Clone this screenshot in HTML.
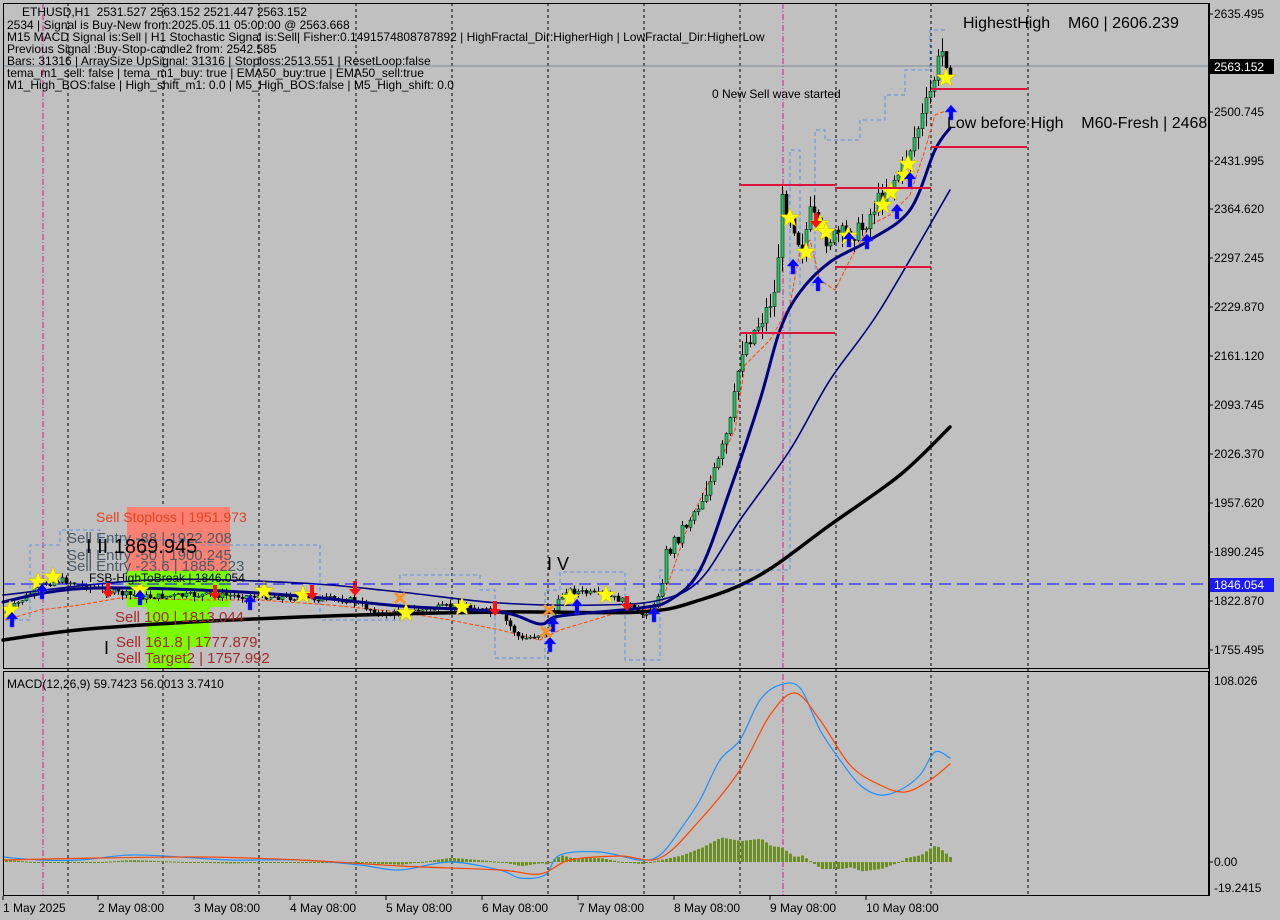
<!DOCTYPE html>
<html><head><meta charset="utf-8"><style>
html,body{margin:0;padding:0;background:#c0c0c0;width:1280px;height:920px;overflow:hidden}
svg{display:block}
text{font-family:"Liberation Sans","DejaVu Sans",sans-serif;white-space:pre}
</style></head><body>
<svg id="s" width="1280" height="920" viewBox="0 0 1280 920" xmlns="http://www.w3.org/2000/svg">
<rect width="1280" height="920" fill="#c0c0c0"/>
<g stroke="#000" stroke-width="1" stroke-dasharray="3,3">
<line x1="68" y1="3" x2="68" y2="895"/><line x1="163" y1="3" x2="163" y2="895"/><line x1="259" y1="3" x2="259" y2="895"/><line x1="356" y1="3" x2="356" y2="895"/><line x1="452" y1="3" x2="452" y2="895"/><line x1="548" y1="3" x2="548" y2="895"/><line x1="644" y1="3" x2="644" y2="895"/><line x1="740" y1="3" x2="740" y2="895"/><line x1="836" y1="3" x2="836" y2="895"/><line x1="931" y1="3" x2="931" y2="895"/><line x1="1028" y1="3" x2="1028" y2="895"/>
</g>
<g stroke="#d0208a" stroke-dasharray="6,2,1,2"><line x1="43" y1="3" x2="43" y2="895"/><line x1="783" y1="3" x2="783" y2="895"/></g>
<line x1="3" y1="66" x2="1209" y2="66" stroke="#778899"/>
<rect x="127" y="507" width="103" height="64" fill="#fa8072"/>
<rect x="127" y="571" width="103" height="36" fill="#7cfc00"/>
<rect x="147" y="607" width="63" height="40" fill="#7cfc00"/>
<rect x="147" y="647" width="43" height="21" fill="#7cfc00"/>
<g id="dyn"></g>
<line x1="3" y1="584" x2="1209" y2="584" stroke="#0000ff" stroke-dasharray="12,6"/>
<g stroke="#dc143c" stroke-width="2">
<line x1="740" y1="185" x2="835" y2="185"/><line x1="835" y1="188" x2="931" y2="188"/><line x1="835" y1="267" x2="931" y2="267"/><line x1="740" y1="333" x2="835" y2="333"/><line x1="931" y1="89" x2="1027" y2="89"/><line x1="931" y1="147" x2="1027" y2="147"/>
</g>
<g font-size="12" fill="#000">
<text x="22" y="16">ETHUSD,H1  2531.527 2563.152 2521.447 2563.152</text>
<text x="7" y="29">2534 | Signal is Buy-New from:2025.05.11 05:00:00 @ 2563.668</text>
<text x="7" y="41">M15 MACD Signal is:Sell | H1 Stochastic Signal is:Sell| Fisher:0.1491574808787892 | HighFractal_Dir:HigherHigh | LowFractal_Dir:HigherLow</text>
<text x="7" y="53">Previous Signal :Buy-Stop-candle2 from: 2542.585</text>
<text x="7" y="65">Bars: 31316 | ArraySize UpSignal: 31316 | Stoploss:2513.551 | ResetLoop:false</text>
<text x="7" y="77">tema_m1_sell: false | tema_m1_buy: true | EMA50_buy:true | EMA50_sell:true</text>
<text x="7" y="89">M1_High_BOS:false | High_shift_m1: 0.0 | M5_High_BOS:false | M5_High_shift: 0.0</text>
<text x="712" y="98">0 New Sell wave started</text>
<text x="7" y="688">MACD(12,26,9) 59.7423 56.0013 3.7410</text>
</g>
<text x="963" y="28" font-size="16">HighestHigh    M60 | 2606.239</text>
<svg x="0" y="0" width="1209" height="668" overflow="hidden"><text x="947" y="128" font-size="16">Low before High    M60-Fresh | 2468.195</text></svg>
<text x="547" y="570" font-size="18">I V</text>
<text x="96" y="522" font-size="14" fill="#e8401c">Sell Stoploss | 1951.973</text>
<text x="67" y="543" font-size="15" fill="#4a5a68">Sell Entry -88 | 1922.208</text>
<text x="67" y="560" font-size="15" fill="#4a5a68">Sell Entry -50 | 1900.245</text>
<text x="67" y="571" font-size="15" fill="#4a5a68">Sell Entry -23.6 | 1885.223</text>
<text x="86" y="553" font-size="20" fill="#000">I II 1869.945</text>
<text x="89" y="582" font-size="12" fill="#000">FSB-HighToBreak | 1846.054</text>
<text x="115" y="622" font-size="15" fill="#a52a2a">Sell 100 | 1813.044</text>
<text x="116" y="647" font-size="15" fill="#a52a2a">Sell 161.8 | 1777.879</text>
<text x="116" y="663" font-size="15" fill="#a52a2a">Sell Target2 | 1757.992</text>
<text x="104" y="654" font-size="18" fill="#000">I</text>
<rect x="3.5" y="3.5" width="1205" height="665" fill="none" stroke="#000"/>
<rect x="3.5" y="671.5" width="1205" height="224" fill="none" stroke="#000"/>
<line x1="1209.5" y1="3" x2="1209.5" y2="896" stroke="#000"/>
<g font-size="12" fill="#000">
<text x="1214" y="18">2635.495</text><text x="1214" y="116">2500.745</text><text x="1214" y="165">2431.995</text><text x="1214" y="213">2364.620</text><text x="1214" y="262">2297.245</text><text x="1214" y="311">2229.870</text><text x="1214" y="360">2161.120</text><text x="1214" y="409">2093.745</text><text x="1214" y="458">2026.370</text><text x="1214" y="507">1957.620</text><text x="1214" y="556">1890.245</text><text x="1214" y="605">1822.870</text><text x="1214" y="654">1755.495</text>
<text x="1214" y="685">108.026</text><text x="1214" y="866">0.00</text><text x="1214" y="892">-19.2415</text>
</g>
<rect x="1210" y="59" width="64" height="15" fill="#000"/><text x="1214" y="71" font-size="12" fill="#fff">2563.152</text>
<rect x="1210" y="578" width="64" height="14" fill="#1a1aff"/><text x="1214" y="589" font-size="12" fill="#fff">1846.054</text>
<g stroke="#000"><line x1="1209" y1="14" x2="1213" y2="14"/><line x1="1209" y1="112" x2="1213" y2="112"/><line x1="1209" y1="161" x2="1213" y2="161"/><line x1="1209" y1="209" x2="1213" y2="209"/><line x1="1209" y1="258" x2="1213" y2="258"/><line x1="1209" y1="307" x2="1213" y2="307"/><line x1="1209" y1="356" x2="1213" y2="356"/><line x1="1209" y1="405" x2="1213" y2="405"/><line x1="1209" y1="454" x2="1213" y2="454"/><line x1="1209" y1="503" x2="1213" y2="503"/><line x1="1209" y1="552" x2="1213" y2="552"/><line x1="1209" y1="601" x2="1213" y2="601"/><line x1="1209" y1="650" x2="1213" y2="650"/><line x1="1209" y1="862" x2="1213" y2="862"/></g>
<g font-size="12" fill="#000">
<text x="3" y="912">1 May 2025</text><text x="98" y="912">2 May 08:00</text><text x="194" y="912">3 May 08:00</text><text x="290" y="912">4 May 08:00</text><text x="386" y="912">5 May 08:00</text><text x="482" y="912">6 May 08:00</text><text x="578" y="912">7 May 08:00</text><text x="674" y="912">8 May 08:00</text><text x="770" y="912">9 May 08:00</text><text x="866" y="912">10 May 08:00</text>
</g>
<g stroke="#000"><line x1="3" y1="896" x2="3" y2="900"/><line x1="98" y1="896" x2="98" y2="900"/><line x1="194" y1="896" x2="194" y2="900"/><line x1="290" y1="896" x2="290" y2="900"/><line x1="386" y1="896" x2="386" y2="900"/><line x1="482" y1="896" x2="482" y2="900"/><line x1="578" y1="896" x2="578" y2="900"/><line x1="674" y1="896" x2="674" y2="900"/><line x1="770" y1="896" x2="770" y2="900"/><line x1="866" y1="896" x2="866" y2="900"/></g>
</svg>
<script>
(function(){
var NS="http://www.w3.org/2000/svg",g=document.getElementById("dyn");
function el(n,a){var e=document.createElementNS(NS,n);for(var k in a)e.setAttribute(k,a[k]);g.appendChild(e);return e;}
function interp(p,x){for(var i=1;i<p.length;i++){if(x<=p[i][0]){var a=p[i-1],b=p[i];return a[1]+(b[1]-a[1])*(x-a[0])/(b[0]-a[0]);}}return p[p.length-1][1];}
function pl(p,st,w,da){el("polyline",{points:p.map(function(q){return q.join(",")}).join(" "),fill:"none",stroke:st,"stroke-width":w,"stroke-dasharray":da||"none","stroke-linejoin":"round"});}
function sm(p,st,w){var d="M"+p[0][0]+" "+p[0][1];for(var i=0;i<p.length-1;i++){var p0=p[Math.max(0,i-1)],p1=p[i],p2=p[i+1],p3=p[Math.min(p.length-1,i+2)];
d+=" C"+(p1[0]+(p2[0]-p0[0])/6).toFixed(1)+" "+(p1[1]+(p2[1]-p0[1])/6).toFixed(1)+" "+(p2[0]-(p3[0]-p1[0])/6).toFixed(1)+" "+(p2[1]-(p3[1]-p1[1])/6).toFixed(1)+" "+p2[0]+" "+p2[1];}
el("path",{d:d,fill:"none",stroke:st,"stroke-width":w,"stroke-linecap":"round"});}
var seed=7;function rnd(){seed=(seed*9301+49297)%233280;return seed/233280;}
var price=[[5,612],[40,585],[60,580],[100,590],[140,597],[200,595],[260,596],[300,598],[350,600],[380,615],[420,610],[460,605],[500,615],[520,640],[545,632],[555,605],[565,590],[600,595],[620,600],[640,615],[655,605],[665,555],[680,530],[700,500],[715,470],[730,420],[740,350],[760,320],[775,290],[780,200],[790,215],[800,250],[810,210],[820,240],[840,235],[860,230],[880,195],[900,170],[920,120],[930,90],[940,50],[950,70]];
pl([[5,620],[30,620],[30,545],[60,545],[60,530],[100,530],[100,540],[200,540],[200,545],[320,545],[320,620],[400,620],[400,575],[480,575],[480,590],[495,590],[495,658],[545,658],[545,590],[560,590],[560,572],[625,572],[625,660],[660,660],[660,570],[790,570],[790,150],[800,150],[800,285],[815,285],[815,130],[825,130],[825,140],[860,140],[860,120],[885,120],[885,95],[905,95],[905,70],[930,70],[930,30],[948,30]],"#5b8fe8",1,"4,3");
pl([[5,620],[40,610],[80,605],[120,598],[200,600],[260,600],[330,605],[400,612],[450,620],[500,630],[540,640],[560,630],[620,612],[660,608],[690,520],[720,460],[735,430],[745,365],[770,340],[790,305],[800,250],[810,240],[820,280],[835,290],[850,260],[870,225],[890,215],[910,195],[925,150],[935,115],[948,110]],"#ff4500",1,"4,2");
var prev=interp(price,3);
for(var x=5;x<=952;x+=4){var c=interp(price,x)+(rnd()-0.5)*((x>660&&x<950)?18:6);var o=prev;prev=c;
var hi=Math.min(o,c)-rnd()*((x>700)?14:5),lo=Math.max(o,c)+rnd()*((x>700)?14:5);
el("line",{x1:x+1.5,y1:hi,x2:x+1.5,y2:lo,stroke:"#000"});
var top=Math.min(o,c),h=Math.max(1,Math.abs(o-c));
el("rect",{x:x,y:top,width:3,height:h,fill:(c<o)?"#22c55e":"#000",stroke:"#000","stroke-width":0.5});}
sm([[3,640],[100,628],[300,617],[500,612],[640,612],[700,600],[760,575],[830,525],[900,475],[950,427]],"#000",3.5);
sm([[3,595],[150,580],[300,583],[400,592],[500,603],[600,605],[660,600],[700,580],[740,520],[790,450],[830,380],[880,310],[950,190]],"#000080",1.6);
sm([[3,602],[50,592],[100,588],[200,590],[300,596],[400,606],[500,612],[540,624],[560,616],[640,608],[670,600],[700,570],[730,490],[760,400],[780,330],[800,292],[830,262],[870,240],[910,210],[935,150],[950,128]],"#000080",3);
function star(cx,cy,r){var p=[];for(var i=0;i<10;i++){var a=-Math.PI/2+i*Math.PI/5,rr=i%2?r*0.42:r;p.push((cx+rr*Math.cos(a)).toFixed(1)+","+(cy+rr*Math.sin(a)).toFixed(1));}el("polygon",{points:p.join(" "),fill:"#ffff00",stroke:"#c8b400","stroke-width":0.5});}
[[10,610],[38,582],[53,577],[140,590],[264,591],[303,595],[406,613],[462,607],[570,598],[606,595],[790,218],[806,252],[820,224],[826,232],[848,236],[883,205],[891,192],[905,175],[908,164],[946,78]].forEach(function(s){star(s[0],s[1],10);});
function up(x,y){el("path",{d:"M"+x+" "+(y-8)+"l-6 7h4v8h4v-8h4z",fill:"#0000ff",stroke:"#4040ff","stroke-width":0.5});}
function dn(x,y){el("path",{d:"M"+x+" "+(y+8)+"l-6 -7h4v-8h4v8h4z",fill:"#ff1010"});}
[[12,620],[42,592],[140,598],[250,603],[550,645],[553,625],[577,607],[654,615],[793,267],[818,284],[849,240],[867,242],[897,212],[910,180],[951,113]].forEach(function(s){up(s[0],s[1]);});
[[108,590],[215,592],[312,592],[355,588],[495,608],[627,603],[816,220]].forEach(function(s){dn(s[0],s[1]);});
[[400,598],[549,610],[546,632]].forEach(function(s){el("path",{d:"M"+(s[0]-5)+" "+(s[1]-5)+"l10 10M"+(s[0]+5)+" "+(s[1]-5)+"l-10 10",stroke:"#ff9020","stroke-width":3});});
var blue=[[3,857],[40,860],[80,860],[130,855],[180,857],[230,860],[300,860],[360,865],[400,870],[450,862],[500,870],[520,878],[545,875],[560,855],[600,852],[640,860],[660,855],[680,830],[700,800],[720,760],[740,740],[760,700],[780,685],[800,688],[820,730],[840,760],[860,785],[880,795],[900,790],[920,775],[935,752],[950,758]];
var ora=[[3,860],[100,858],[200,857],[300,860],[400,866],[500,870],[540,874],[570,860],[620,856],[660,858],[700,820],[740,770],[770,715],[795,693],[820,720],[850,765],[880,785],[905,792],[930,780],[950,764]];
for(var x=5;x<=952;x+=4){var d=(interp(ora,x)-interp(blue,x))*0.7;d=Math.max(-24,Math.min(34,d));var y=862-d;
el("rect",{x:x,y:Math.min(y,862),width:3,height:Math.max(1,Math.abs(d)),fill:"#6b8e23"});}
sm(blue,"#1e90ff",1.2);sm(ora,"#ff4500",1.2);
})();
</script>
</body></html>
